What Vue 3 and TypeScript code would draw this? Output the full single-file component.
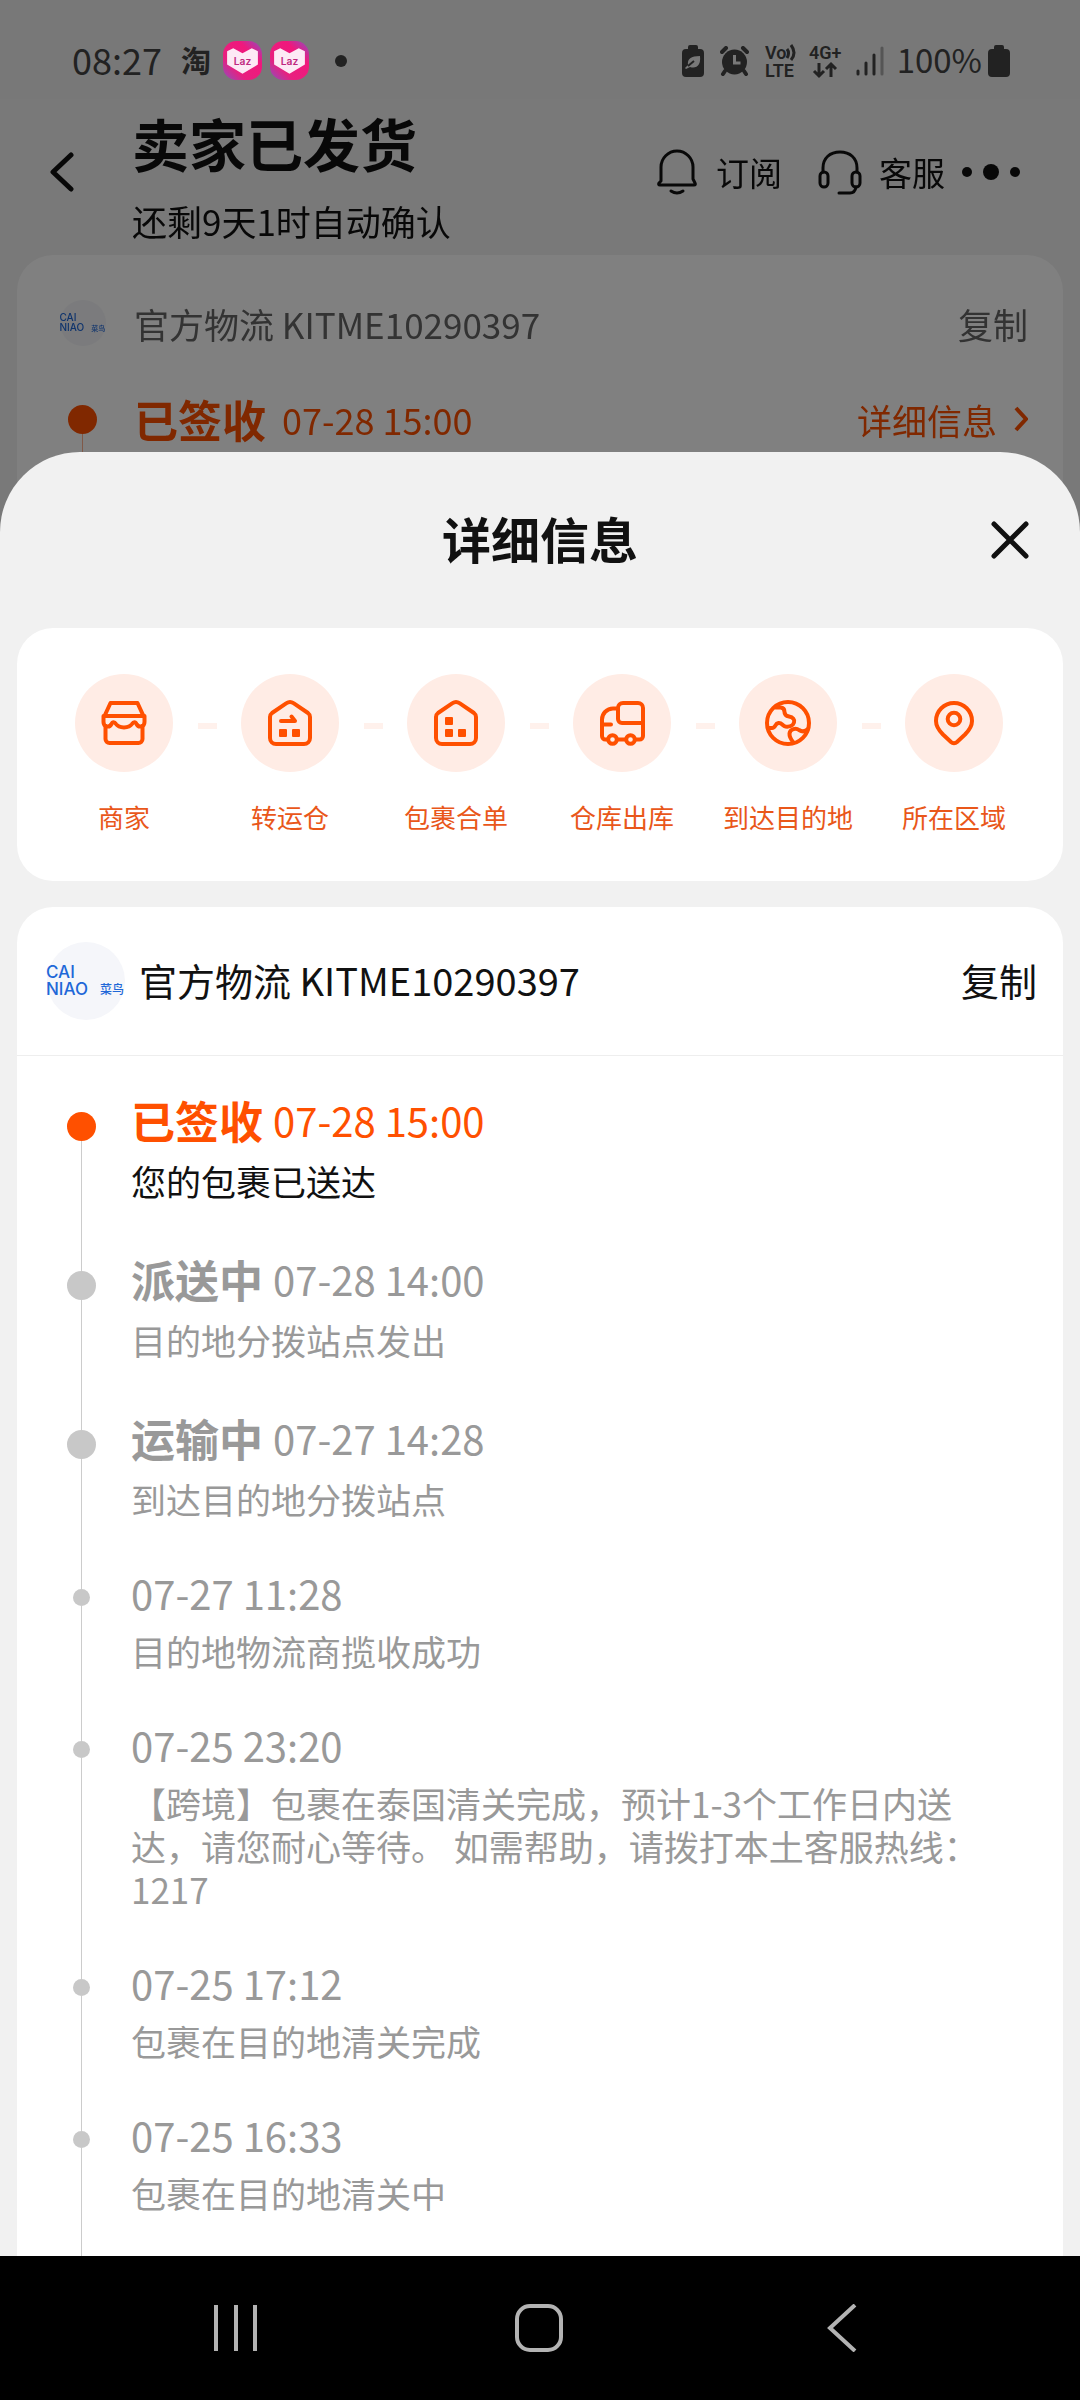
<script setup lang="ts">
interface Step {
  label: string
  icon: 'store' | 'transfer' | 'merge' | 'truck' | 'globe' | 'pin'
}

interface TrackEvent {
  status?: string
  time: string
  text: string
  current?: boolean
}

const trackingNo = 'KITME10290397'

const steps: Step[] = [
  { label: '商家', icon: 'store' },
  { label: '转运仓', icon: 'transfer' },
  { label: '包裹合单', icon: 'merge' },
  { label: '仓库出库', icon: 'truck' },
  { label: '到达目的地', icon: 'globe' },
  { label: '所在区域', icon: 'pin' },
]

const events: TrackEvent[] = [
  { status: '已签收', time: '07-28 15:00', text: '您的包裹已送达', current: true },
  { status: '派送中', time: '07-28 14:00', text: '目的地分拨站点发出' },
  { status: '运输中', time: '07-27 14:28', text: '到达目的地分拨站点' },
  { time: '07-27 11:28', text: '目的地物流商揽收成功' },
  {
    time: '07-25 23:20',
    text: '【跨境】包裹在泰国清关完成，预计1-3个工作日内送\n达，请您耐心等待。 如需帮助，请拨打本土客服热线：\n1217',
  },
  { time: '07-25 17:12', text: '包裹在目的地清关完成' },
  { time: '07-25 16:33', text: '包裹在目的地清关中' },
]
</script>

<template>
  <div class="screen">
    <div class="status-bar">
      <div class="status-left">
        <span class="clock">08:27</span>
        <span class="tao">淘</span>
        <svg v-for="n in 2" :key="n" class="laz" viewBox="0 0 38 38" aria-hidden="true">
          <defs>
            <linearGradient :id="'laz' + n" x1="1" y1="0" x2="0" y2="1">
              <stop offset="0" stop-color="#8b4fc0" />
              <stop offset="0.3" stop-color="#f0187c" />
              <stop offset="0.7" stop-color="#e8207f" />
              <stop offset="1" stop-color="#8b4fc0" />
            </linearGradient>
          </defs>
          <rect width="38" height="38" rx="13" :fill="`url(#laz${n})`" />
          <path d="M4 10 10 7l9 5 9-5 6 3v13L19 32 4 23Z" fill="#fdeaf5" />
          <text x="19" y="23" text-anchor="middle" font-size="10" font-weight="600" fill="#c0287f">Laz</text>
        </svg>
        <i class="more-dot"></i>
      </div>
      <div class="status-right">
        <svg width="22" height="32" viewBox="0 0 22 32" aria-hidden="true">
          <path d="M6 4V2q0-2 2-2h6q2 0 2 2v2h2q4 0 4 4v20q0 4-4 4H4q-4 0-4-4V8q0-4 4-4Z" fill="#222" />
          <path d="M18 11c-9 0-13 3-12 9l-3 3 1 1 4-2c7 2 11-2 10-11Z" fill="#787878" />
          <path d="m6 21 6-5" stroke="#222" stroke-width="2" />
        </svg>
        <svg width="29" height="30" viewBox="0 0 29 30" aria-hidden="true">
          <circle cx="14.500" cy="16" r="12.500" fill="#222" />
          <path d="m2 6 4-4M27 6l-4-4M5 25l-2 3M24 25l2 3" stroke="#222" stroke-width="4" stroke-linecap="round" />
          <path d="M14.500 9v8h6" fill="none" stroke="#787878" stroke-width="3" />
        </svg>
        <svg width="31" height="40" viewBox="0 0 31 40" aria-hidden="true">
          <text x="0" y="18" font-size="18" font-weight="600">Vo</text>
          <path d="M22 8q3 4 0 9M26 4q6 8 0 15" fill="none" stroke="#222" stroke-width="3" />
          <text x="0" y="36" font-size="18" font-weight="600">LTE</text>
        </svg>
        <svg width="34" height="40" viewBox="0 0 34 40" aria-hidden="true">
          <text x="0" y="18" font-size="18" font-weight="600">4G+</text>
          <path d="M10 22v13M5 30l5 5 5-5M22 36V23M17 28l5-5 5 5" fill="none" stroke="#222" stroke-width="3" />
        </svg>
        <svg width="28" height="30" viewBox="0 0 28 30" aria-hidden="true">
          <path d="M2 25v3M10 17v11M18 9v19" stroke="#222" stroke-width="3" stroke-linecap="round" />
          <path d="M26 2v26" stroke="#555" stroke-width="3" stroke-linecap="round" />
        </svg>
        <span class="percent">100%</span>
        <svg width="22" height="32" viewBox="0 0 22 32" aria-hidden="true">
          <path d="M6 4V2q0-2 2-2h6q2 0 2 2v2h2q4 0 4 4v20q0 4-4 4H4q-4 0-4-4V8q0-4 4-4Z" fill="#222" />
        </svg>
      </div>
    </div>

    <div class="order-page">
      <header class="order-header">
        <button class="back" aria-label="返回">
          <svg width="24" height="40" viewBox="0 0 24 40"><path d="M21 3 3 20l18 17" /></svg>
        </button>
        <div class="order-title">
          <h1>卖家已发货</h1>
          <p>还剩9天1时自动确认</p>
        </div>
        <button class="tool">
          <svg width="40" height="46" viewBox="0 0 40 46">
            <path d="M4 32V18a16 16 0 0 1 32 0v12l2 4q1 2-1 2H3q-2 0-1-2Z" />
            <path d="M14 42q6 4 12 0" />
          </svg>
          订阅
        </button>
        <button class="tool service">
          <svg width="44" height="46" viewBox="0 0 44 46">
            <path d="M5 23v-4C5 9 12 3 22 3s17 6 17 16v4" />
            <rect x="2" y="23" width="8" height="15" rx="4" />
            <rect x="34" y="23" width="8" height="15" rx="4" />
            <path d="M38 38q-1 6-6 6H21" />
          </svg>
          客服
        </button>
        <button class="dots" aria-label="更多">
          <svg width="58" height="16" viewBox="0 0 58 16">
            <circle cx="5" cy="8" r="5" /><circle cx="29" cy="8" r="8" /><circle cx="53" cy="8" r="5" />
          </svg>
        </button>
      </header>

      <section class="order-card">
        <div class="order-row">
          <svg class="logo small" viewBox="0 0 78 78" aria-hidden="true">
            <circle cx="39" cy="39" r="39" fill="#f5f6fa" />
            <text x="-1" y="36" font-size="17">CAI</text>
            <text x="-1" y="53" font-size="17">NIAO</text>
            <text class="cn" x="53" y="52" font-size="12">菜鸟</text>
          </svg>
          <span class="grey">官方物流 {{ trackingNo }}</span>
          <button class="copy grey">复制</button>
        </div>
        <div class="order-row latest">
          <i class="mark"></i>
          <strong>已签收</strong>
          <time>07-28 15:00</time>
          <a href="#detail">
            详细信息
            <svg width="14" height="26" viewBox="0 0 14 26"><path d="m2 2 10 11L2 24" /></svg>
          </a>
        </div>
        <i class="stub"></i>
      </section>
    </div>

    <main id="detail" class="sheet">
      <header class="sheet-header">
        <h2>详细信息</h2>
        <button aria-label="关闭">
          <svg width="38" height="38" viewBox="0 0 38 38"><path d="m3 3 32 32M35 3 3 35" /></svg>
        </button>
      </header>

      <ol class="steps">
        <li v-for="step in steps" :key="step.label">
          <span class="bubble">
            <svg width="48" height="48" viewBox="0 0 48 48" aria-hidden="true">
              <template v-if="step.icon === 'store'">
                <path d="M10.500 4h27l6 13h-39Z" />
                <path d="M3.500 17v6c0 5 6 6 8 2 1-2.500 3-2.500 4.500 0 3 4.500 13 4.500 16 0 1.500-2.500 3.500-2.500 4.500 0 2 4 8 3 8-2v-6" />
                <path d="M5.500 27v13a4 4 0 0 0 4 4h29a4 4 0 0 0 4-4V27" />
              </template>
              <template v-else-if="step.icon === 'transfer' || step.icon === 'merge'">
                <path d="M20.500 4.200a6 6 0 0 1 7 0L42 14a5 5 0 0 1 2 4v21a6 6 0 0 1-6 6H10a6 6 0 0 1-6-6V18a5 5 0 0 1 2-4Z" />
                <path v-if="step.icon === 'transfer'" d="M15 22h14l-3.500-4.500" />
                <rect v-else class="block" x="13" y="18" width="8" height="8" rx="1" />
                <rect class="block" x="13" y="30" width="8" height="8" rx="1" />
                <rect class="block" x="26" y="30" width="8" height="8" rx="1" />
              </template>
              <template v-else-if="step.icon === 'truck'">
                <path d="M25 4h15a5 5 0 0 1 5 5v15H24a4 4 0 0 1-4-4V9a5 5 0 0 1 5-5Z" />
                <path d="M19 9.500h-4a11 11 0 0 0-11 11V37a3.500 3.500 0 0 0 3.500 3.500H10M19 40.500h9M37 40.500h4.500A3.500 3.500 0 0 0 45 37V24M4 25.500h9" />
                <circle cx="14.500" cy="40.500" r="4.300" />
                <circle cx="32.500" cy="40.500" r="4.300" />
              </template>
              <template v-else-if="step.icon === 'globe'">
                <circle cx="24" cy="24" r="21" />
                <path d="M11.500 8.500h5c3 0 4 1.500 4 4.500s1.500 4 4.500 4.500c4 .8 6 3 5 6-1 3.500-5 4.500-8.500 4-3-.5-3.500-4-7-3.500-4 .5-2.500 5-6.500 5H4" />
                <path d="M44 30c-3 3-6 3-9 1-3-2.300-9-1-9.500 3.500-.3 4 1.500 6 4 9" />
              </template>
              <template v-else>
                <path d="M24 4a18 18 0 0 1 18 18c0 6-3 9.500-7 13.500l-8 7.500a4.500 4.500 0 0 1-6 0l-8-7.500C9 31.500 6 28 6 22A18 18 0 0 1 24 4Z" />
                <circle cx="24" cy="20" r="6.300" />
              </template>
            </svg>
          </span>
          <span class="step-label">{{ step.label }}</span>
        </li>
      </ol>

      <section class="tracking">
        <header class="carrier">
          <svg class="logo" viewBox="0 0 78 78" aria-hidden="true">
            <circle cx="39" cy="39" r="39" fill="#f5f6fa" />
            <text x="-1" y="36" font-size="17">CAI</text>
            <text x="-1" y="53" font-size="17">NIAO</text>
            <text class="cn" x="53" y="52" font-size="12">菜鸟</text>
          </svg>
          <span>官方物流 {{ trackingNo }}</span>
          <button class="copy">复制</button>
        </header>
        <ol class="timeline">
          <li v-for="event in events" :key="event.time" :class="{ major: event.status, current: event.current }">
            <span class="rail"><i class="lead"></i><i class="dot"></i><i class="tail"></i></span>
            <div class="event">
              <p class="event-head">
                <strong v-if="event.status">{{ event.status }}</strong>
                <time>{{ event.time }}</time>
              </p>
              <p class="event-text">{{ event.text }}</p>
            </div>
          </li>
        </ol>
      </section>
    </main>

    <nav class="system-nav">
      <button aria-label="最近任务">
        <svg width="48" height="48" viewBox="0 0 48 48"><path d="M4 1v46M24 1v46M43 1v46" /></svg>
      </button>
      <button aria-label="主屏幕">
        <svg width="48" height="48" viewBox="0 0 48 48"><rect x="2" y="2" width="44" height="44" rx="13" /></svg>
      </button>
      <button aria-label="返回">
        <svg width="48" height="48" viewBox="0 0 48 48"><path d="M37 1 12 24l25 23" /></svg>
      </button>
    </nav>
  </div>
</template>

<style>
body {
  margin: 0;
}
</style>

<style scoped>
.screen {
  display: flex;
  flex-direction: column;
  height: 100vh;
  overflow: hidden;
  background: #787878;
  color: #111;
  font-family: 'Noto Sans CJK SC', 'Noto Sans', sans-serif;
  font-size: 35px;
}

h1,
h2,
p,
ol {
  margin: 0;
  padding: 0;
}

ol {
  list-style: none;
}

button {
  display: flex;
  align-items: center;
  padding: 0;
  border: 0;
  background: none;
  color: inherit;
  font: inherit;
}

svg {
  display: block;
  flex: none;
}

/* status bar */
.status-bar {
  display: flex;
  flex: none;
  align-items: center;
  justify-content: space-between;
  box-sizing: border-box;
  height: 99px;
  padding: 22px 70px 0 72px;
  color: #222;
}

.status-left,
.status-right {
  display: flex;
  align-items: center;
}

.clock,
.tao,
.percent {
  padding-bottom: 4px;
  line-height: 40px;
}

.clock {
  margin-right: 19px;
  font-size: 36px;
}

.tao {
  margin-right: 12px;
  font-size: 30px;
  font-weight: 700;
}

.laz {
  width: 39px;
  height: 39px;
  margin-right: 8px;
  font-family: Inter, sans-serif;
}

.more-dot {
  width: 12px;
  height: 12px;
  margin-left: 18px;
  border-radius: 50%;
  background: #222;
}

.status-right {
  font-family: Roboto, 'Noto Sans CJK SC', sans-serif;
}

.status-right svg {
  margin-right: 13px;
  fill: #222;
}

.status-right svg:first-child,
.status-right svg:nth-child(2) {
  margin-right: 16px;
}

.status-right svg:last-child {
  margin: 0 0 0 6px;
}

.percent {
  font-family: 'Noto Sans CJK SC', sans-serif;
  font-size: 33px;
}

/* order page, dimmed behind the sheet */
.order-page {
  display: flex;
  flex: none;
  flex-direction: column;
  background: #f1f1f1;
  filter: brightness(0.5);
}

.order-header {
  display: flex;
  align-items: center;
  height: 146px;
  padding: 0 60px 0 50px;
  font-size: 33px;
}

.order-header svg {
  fill: none;
  stroke: #111;
  stroke-width: 3;
  stroke-linecap: round;
  stroke-linejoin: round;
}

.order-header .back svg {
  stroke-width: 5;
}

.order-header .dots svg {
  fill: #111;
  stroke: none;
}

.order-title {
  flex: 1;
  margin-left: 58px;
  padding-bottom: 4px;
}

.order-title h1 {
  font-size: 57px;
  font-weight: 700;
  line-height: 90px;
}

.order-title p {
  margin-top: 12px;
  font-size: 35px;
  line-height: 44px;
}

.tool {
  gap: 19px;
  white-space: nowrap;
}

.service {
  gap: 17px;
  margin: 0 17px 0 36px;
}

.order-card {
  height: 280px;
  margin: 10px 17px 0;
  padding: 20px 35px 0 43px;
  box-sizing: border-box;
  border-radius: 36px 36px 0 0;
  background: #fff;
}

.order-row {
  display: flex;
  align-items: center;
  height: 96px;
}

.grey {
  color: #666;
}

.logo {
  width: 78px;
  height: 78px;
  margin-right: 14px;
  overflow: visible;
  font-family: Inter, sans-serif;
  font-weight: 500;
  fill: #1f68d8;
}

.logo .cn {
  font-family: 'Noto Sans CJK SC', sans-serif;
}

.logo.small {
  width: 46px;
  height: 46px;
  margin-right: 28px;
}

.copy {
  margin-left: auto;
}

.latest {
  color: #ff5000;
}

.mark {
  width: 29px;
  height: 29px;
  margin: 0 37px 0 8px;
  border-radius: 50%;
  background: #ff5000;
}

.latest strong {
  font-size: 44px;
}

.latest time {
  margin-left: 16px;
  font-size: 36px;
}

.latest a {
  display: flex;
  align-items: center;
  gap: 17px;
  margin-left: auto;
  color: inherit;
  text-decoration: none;
}

.latest a svg {
  fill: none;
  stroke: currentColor;
  stroke-width: 4;
}

.stub {
  display: block;
  width: 1px;
  height: 60px;
  margin: -34px 0 0 22px;
  background: #ffb28f;
}

/* detail sheet */
.sheet {
  z-index: 1;
  flex: 1;
  min-height: 0;
  margin-top: -83px;
  padding: 0 17px;
  overflow: hidden;
  border-radius: 80px 80px 0 0;
  background: #f1f1f1;
}

.sheet-header {
  display: grid;
  grid-template-columns: 1fr auto 1fr;
  align-items: center;
  height: 176px;
  padding: 0 34px;
}

.sheet-header h2 {
  grid-column: 2;
  padding-bottom: 4px;
  font-size: 49px;
  font-weight: 700;
  line-height: 60px;
}

.sheet-header button {
  justify-self: end;
}

.sheet-header svg {
  stroke: #111;
  stroke-width: 5;
  stroke-linecap: round;
}

.steps {
  display: flex;
  padding: 46px 26px 46px 24px;
  border-radius: 36px;
  background: #fff;
}

.steps li {
  position: relative;
  display: flex;
  flex: 1;
  flex-direction: column;
  align-items: center;
}

.steps li + li::before {
  content: '';
  position: absolute;
  top: 49px;
  left: -9px;
  width: 19px;
  height: 6px;
  background: #fff1ec;
}

.bubble {
  display: flex;
  align-items: center;
  justify-content: center;
  width: 98px;
  height: 98px;
  border-radius: 50%;
  background: #ffece5;
}

.bubble svg {
  fill: none;
  stroke: #ff5000;
  stroke-width: 4;
  stroke-linecap: round;
  stroke-linejoin: round;
}

.bubble .block {
  fill: #ff5000;
  stroke: none;
}

.step-label {
  margin-top: 26px;
  color: #e9571a;
  font-size: 26px;
  line-height: 37px;
  white-space: nowrap;
}

.tracking {
  margin-top: 26px;
  border-radius: 36px 36px 0 0;
  background: #fff;
}

.carrier {
  display: flex;
  align-items: center;
  height: 148px;
  padding: 0 26px 0 30px;
  border-bottom: 1px solid #eee;
  font-size: 38px;
}

.carrier span,
.carrier .copy {
  padding-bottom: 4px;
}

.timeline {
  padding: 36px 50px 0;
}

.timeline li {
  display: flex;
  gap: 35px;
  color: #999;
}

.rail {
  display: flex;
  flex: none;
  flex-direction: column;
  align-items: center;
  width: 29px;
}

.lead,
.tail {
  width: 1px;
  background: #ccc;
}

.lead {
  height: 20px;
}

.tail {
  flex: 1;
}

.dot {
  width: 17px;
  height: 17px;
  border-radius: 50%;
  background: #c8c8c8;
}

.major .dot {
  width: 29px;
  height: 29px;
}

.current .lead {
  background: none;
}

.current .dot {
  background: #ff5000;
}

.event {
  padding-bottom: 49px;
}

.event-head {
  display: flex;
  align-items: center;
  gap: 10px;
  height: 48px;
  line-height: 48px;
}

.event-head time {
  font-size: 40px;
}

.event-head strong {
  font-size: 44px;
}

.major .event-head {
  height: 55px;
}

.current .event-head {
  color: #ff5000;
}

.event-text {
  margin-top: 12px;
  line-height: 43px;
  white-space: pre-line;
}

.current .event-text {
  color: #111;
}

/* system navigation */
.system-nav {
  z-index: 1;
  display: flex;
  flex: none;
  height: 144px;
  padding: 0 87px 0 85px;
  background: #000;
}

.system-nav button {
  flex: 1;
  justify-content: center;
}

.system-nav svg {
  fill: none;
  stroke: #b3b3b3;
  stroke-width: 4;
}
</style>
